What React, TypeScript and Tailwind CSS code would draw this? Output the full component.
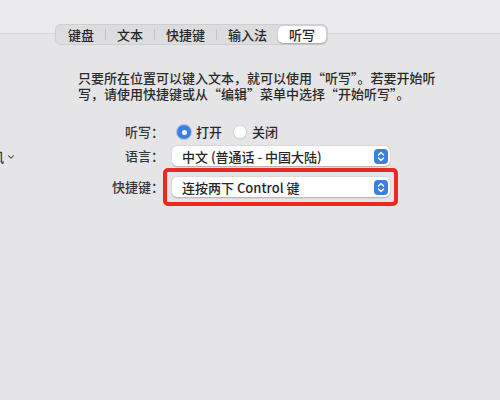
import { ChevronDown } from "lucide-react";

const font = { fontFamily: '"Noto Sans CJK SC", "Noto Sans", sans-serif' };

function Stepper() {
  return (
    <div className="w-[14px] h-[15px] rounded-[4px] bg-[#3d7fe0] flex items-center justify-center">
      <svg width="8" height="11" viewBox="0 0 8 11" fill="none" stroke="white" strokeWidth="1.4" strokeLinecap="round" strokeLinejoin="round">
        <path d="M1.5 4 L4 1.6 L6.5 4" />
        <path d="M1.5 7 L4 9.4 L6.5 7" />
      </svg>
    </div>
  );
}

function Popup({ label }: { label: string }) {
  return (
    <div className="w-[218px] h-[20px] bg-white rounded-[5px] shadow-[0_0.5px_1.5px_rgba(0,0,0,0.25)] flex items-center justify-between pl-[10px] pr-[2px]">
      <span className="text-[13px] text-[#262626] leading-none">{label}</span>
      <Stepper />
    </div>
  );
}

function Radio({ on }: { on?: boolean }) {
  return on ? (
    <div className="w-[14px] h-[14px] rounded-full bg-[#3d7fe0] flex items-center justify-center shadow-[0_0_0_1px_rgba(61,127,224,0.35)]">
      <div className="w-[5px] h-[5px] rounded-full bg-white" />
    </div>
  ) : (
    <div className="w-[14px] h-[14px] rounded-full bg-white border border-[#d9d9dc] shadow-[0_0.5px_1px_rgba(0,0,0,0.1)]" />
  );
}

export default function App() {
  const tabs = ["键盘", "文本", "快捷键", "输入法", "听写"];
  return (
    <div className="relative w-[500px] h-[400px] bg-[#e5e5e7] overflow-hidden font-medium text-[#2a2a2a]" style={font}>
      <div className="h-[34px] bg-[#ebebed] border-b border-[#d6d6d9]" />

      <div className="-mt-[10px] ml-[55px] flex">
        <div className="flex h-[21px] items-center rounded-[6px] bg-[#dddde0] border border-[#cfcfd3] p-[1px]">
          {tabs.map((t, i) => {
            const active = i === tabs.length - 1;
            return (
              <div key={t} className="flex items-center h-full">
                {i > 0 && !active && <div className="w-px h-[11px] bg-[#c4c4c8]" />}
                <div
                  className={
                    active
                      ? "h-full flex items-center px-[11px] bg-white rounded-[5px] shadow-[0_0.5px_1.5px_rgba(0,0,0,0.25)] text-[13px] text-[#262626]"
                      : "h-full flex items-center px-[11px] text-[13px] text-[#262626]"
                  }
                >
                  {t}
                </div>
              </div>
            );
          })}
        </div>
      </div>

      <p className="mt-[25px] ml-[78px] text-[13px] leading-[16px] text-[#2a2a2a]">
        只要所在位置可以键入文本，就可以使用“听写”。若要开始听
        <br />
        写，请使用快捷键或从“编辑”菜单中选择“开始听写”。
      </p>

      <div className="ml-[78px] mt-[20px] flex flex-col">
        <div className="flex items-center h-[20px]">
          <div className="w-[86px] text-right text-[13px] text-[#363636]">听写：</div>
          <div className="ml-[13px] flex items-center">
            <Radio on />
            <span className="ml-[5px] text-[13px]">打开</span>
            <div className="ml-[11px]">
              <Radio />
            </div>
            <span className="ml-[5px] text-[13px]">关闭</span>
          </div>
        </div>

        <div className="flex items-center h-[20px] mt-[4px]">
          <div className="w-[86px] text-right text-[13px] text-[#363636]">语言：</div>
          <div className="ml-[8px]">
            <Popup label="中文 (普通话 - 中国大陆)" />
          </div>
        </div>

        <div className="flex items-center h-[20px] mt-[11px]">
          <div className="w-[86px] text-right text-[13px] text-[#363636]">快捷键：</div>
          <div className="ml-[8px] relative">
            <Popup label="连按两下 Control 键" />
            <div className="absolute -left-[9px] -top-[9px] -right-[8px] -bottom-[9px] border-[4px] border-[#ea2a20] rounded-[5px]" />
          </div>
        </div>
      </div>

      <div className="absolute left-[-9px] top-[147px] flex items-center text-[13px] text-[#363636]">
        <span>风</span>
        <ChevronDown className="ml-[2px] w-[10px] h-[10px]" strokeWidth={2.5} />
      </div>
    </div>
  );
}
